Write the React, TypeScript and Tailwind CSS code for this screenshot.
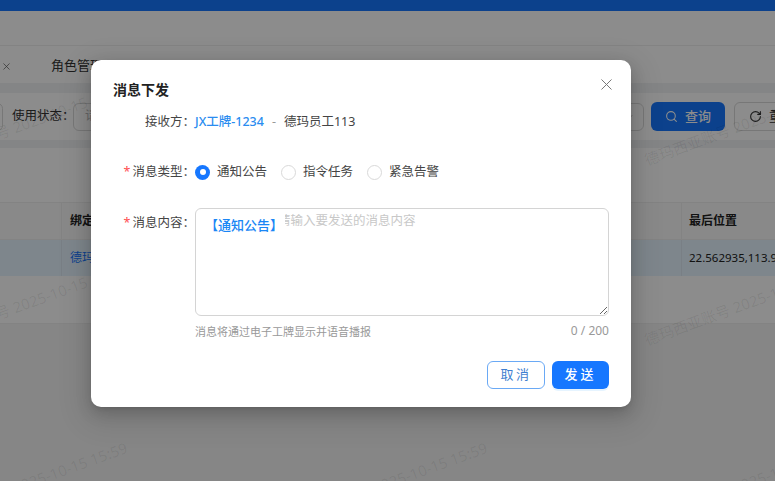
import React from 'react';
import { Search, RotateCw, X, ChevronDown } from 'lucide-react';

const font = 'font-["Noto_Sans","Noto_Sans_CJK_SC",sans-serif]';

const watermarks = [
    'left-[-75px] top-[150px]',
    'left-[285px] top-[150px]',
    'left-[645px] top-[150px]',
    'left-[-75px] top-[330px]',
    'left-[285px] top-[330px]',
    'left-[645px] top-[330px]',
    'left-[-75px] top-[510px]',
    'left-[285px] top-[510px]',
    'left-[645px] top-[510px]',
];

const messageTypes = ['通知公告', '指令任务', '紧急告警'];

const BackgroundPage = () => (
    <div className="flex h-full w-full flex-col bg-[#f5f5f5]">
        <div className="h-[11px] shrink-0 bg-[#1677ff]" />
        <div className="h-[35px] shrink-0 border-b border-[#eeeeee] bg-white" />
        <div className="flex h-[37px] shrink-0 items-center bg-white pl-px pt-[3px] text-[13px] text-[#333]">
            <X size={11} strokeWidth={1.5} className="text-[#555]" />
            <span className="ml-[39px]">角色管理</span>
        </div>
        <div className="h-[10px] shrink-0 bg-[#f0f2f5]" />
        <div className="flex h-[47px] shrink-0 items-center bg-white text-[12.5px] text-[#333]">
            <div className="ml-[-8px] h-[28px] w-[11px] shrink-0 rounded-md border border-[#d9d9d9]" />
            <span className="ml-[9px] w-[61px] shrink-0 whitespace-nowrap">使用状态：</span>
            <div className="flex h-[28px] w-[571px] shrink-0 items-center justify-between rounded-md border border-[#d9d9d9] pl-[11px] pr-2 text-[#bbb]">
                请选择
                <ChevronDown size={12} className="text-[#bbb]" />
            </div>
            <div className="ml-[7px] flex h-[29px] w-[74px] shrink-0 items-center justify-center gap-[7px] rounded-md bg-[#1677ff] text-[13px] font-medium text-white">
                <Search size={13} />
                查询
            </div>
            <div className="ml-[9px] flex h-[29px] w-[74px] shrink-0 items-center gap-[7px] rounded-md border border-[#d9d9d9] pl-[14px] text-[13px]">
                <RotateCw size={13} className="shrink-0" />
                重置
            </div>
        </div>
        <div className="h-[8px] shrink-0 bg-[#f0f2f5]" />
        <div className="h-[54px] shrink-0 bg-white" />
        <div className="flex h-[38px] shrink-0 items-center border-y border-[#eeeeee] bg-[#fafafa] text-[12px] font-semibold text-[#222]">
            <div className="h-full w-[62px] shrink-0 border-r border-[#eeeeee]" />
            <span className="ml-[8px] w-[611px] shrink-0">绑定状态</span>
            <div className="h-full shrink-0 border-l border-[#eeeeee] pl-[7px] leading-[36px]">最后位置</div>
        </div>
        <div className="flex h-[36px] shrink-0 items-center bg-[#e6f4ff] text-[12px] text-[#222]">
            <div className="h-full w-[62px] shrink-0 border-r border-[#dce8f2]" />
            <span className="ml-[8px] w-[611px] shrink-0 text-[#1677ff]">德玛员工</span>
            <div className="flex h-full shrink-0 items-center whitespace-nowrap border-l border-[#dce8f2] pl-[7px] text-[11.5px]">22.562935,113.9</div>
        </div>
        <div className="h-[48px] shrink-0 border-b border-[#eeeeee] bg-white" />
    </div>
);

const MessageDialog = () => (
    <div className="ml-[91px] mt-[60px] flex h-[347px] w-[540px] flex-col rounded-[10px] bg-white px-[22px] shadow-[0_6px_16px_0_rgba(0,0,0,0.16),0_3px_6px_-4px_rgba(0,0,0,0.2),0_9px_28px_8px_rgba(0,0,0,0.1)]">
        <div className="mt-[18px] flex h-[22px] items-center justify-between">
            <span className="text-[14px] font-semibold text-[#222]">消息下发</span>
            <X size={19} strokeWidth={1.25} className="mr-[-7px] mt-[-9px] text-[#777]" />
        </div>
        <div className="mt-[12px] flex h-[20px] items-center text-[12.5px] text-[#444]">
            <span className="w-[82px] shrink-0 text-right">接收方：</span>
            <span className="font-medium text-[#2a8cf0]">JX工牌-1234</span>
            <span className="mx-[8px] text-[#999]">-</span>
            <span>德玛员工113</span>
        </div>
        <div className="mt-[30px] flex h-[20px] items-center text-[12.5px] text-[#444]">
            <span className="w-[82px] shrink-0 text-right">
                <span className="mr-[2px] text-[#ff4d4f]">*</span>消息类型：
            </span>
            <div className="flex items-center gap-[14px]">
                {messageTypes.map((type, index) => (
                    <label key={type} className="flex items-center gap-[7px]">
                        {index === 0 ? (
                            <span className="flex h-[15px] w-[15px] items-center justify-center rounded-full bg-[#1677ff]">
                                <span className="h-[6px] w-[6px] rounded-full bg-white" />
                            </span>
                        ) : (
                            <span className="h-[15px] w-[15px] rounded-full border border-[#d9d9d9] bg-white" />
                        )}
                        {type}
                    </label>
                ))}
            </div>
        </div>
        <div className="mt-[26px] flex items-start text-[12.5px] text-[#444]">
            <span className="mt-[6px] w-[82px] shrink-0 text-right">
                <span className="mr-[2px] text-[#ff4d4f]">*</span>消息内容：
            </span>
            <div className="flex-1">
                <div className="relative h-[108px]">
                    <textarea
                        className="block h-full w-full rounded-md border border-[#d4d4d4] pl-[82px] pt-[3px] text-[12.5px] outline-none placeholder:text-[#c8c8c8]"
                        placeholder="请输入要发送的消息内容"
                    />
                    <span className="absolute left-[10px] top-[6px] bg-white pr-[2px] text-[13px] font-medium leading-[22px] text-[#1a86f5]">
                        【通知公告】
                    </span>
                </div>
                <div className="mt-[6px] flex items-center justify-between">
                    <span className="mt-[2px] text-[11px] text-[#999]">消息将通过电子工牌显示并语音播报</span>
                    <span className="text-[12px] text-[#999]">0 / 200</span>
                </div>
            </div>
        </div>
        <div className="mt-[20px] flex justify-end gap-[7px]">
            <button className="h-[28px] w-[58px] rounded-md border border-[#6aa9f5] bg-white text-[13px] tracking-[2.5px] text-[#3f7fd0]">
                取消
            </button>
            <button className="h-[28px] w-[57px] rounded-md bg-[#1677ff] text-[13px] font-medium tracking-[3px] text-white shadow-[0_2px_0_rgba(5,145,255,0.1)]">
                发送
            </button>
        </div>
    </div>
);

export default function App() {
    return (
        <div className={`relative h-[481px] w-[775px] overflow-hidden ${font}`}>
            <BackgroundPage />
            {watermarks.map((position) => (
                <span
                    key={position}
                    className={`pointer-events-none absolute origin-left -rotate-[20deg] whitespace-nowrap text-[15px] leading-[20px] text-black/[0.08] ${position}`}
                >
                    德玛西亚账号 2025-10-15 15:59
                </span>
            ))}
            <div className="absolute inset-0 bg-black/45">
                <MessageDialog />
            </div>
        </div>
    );
}
